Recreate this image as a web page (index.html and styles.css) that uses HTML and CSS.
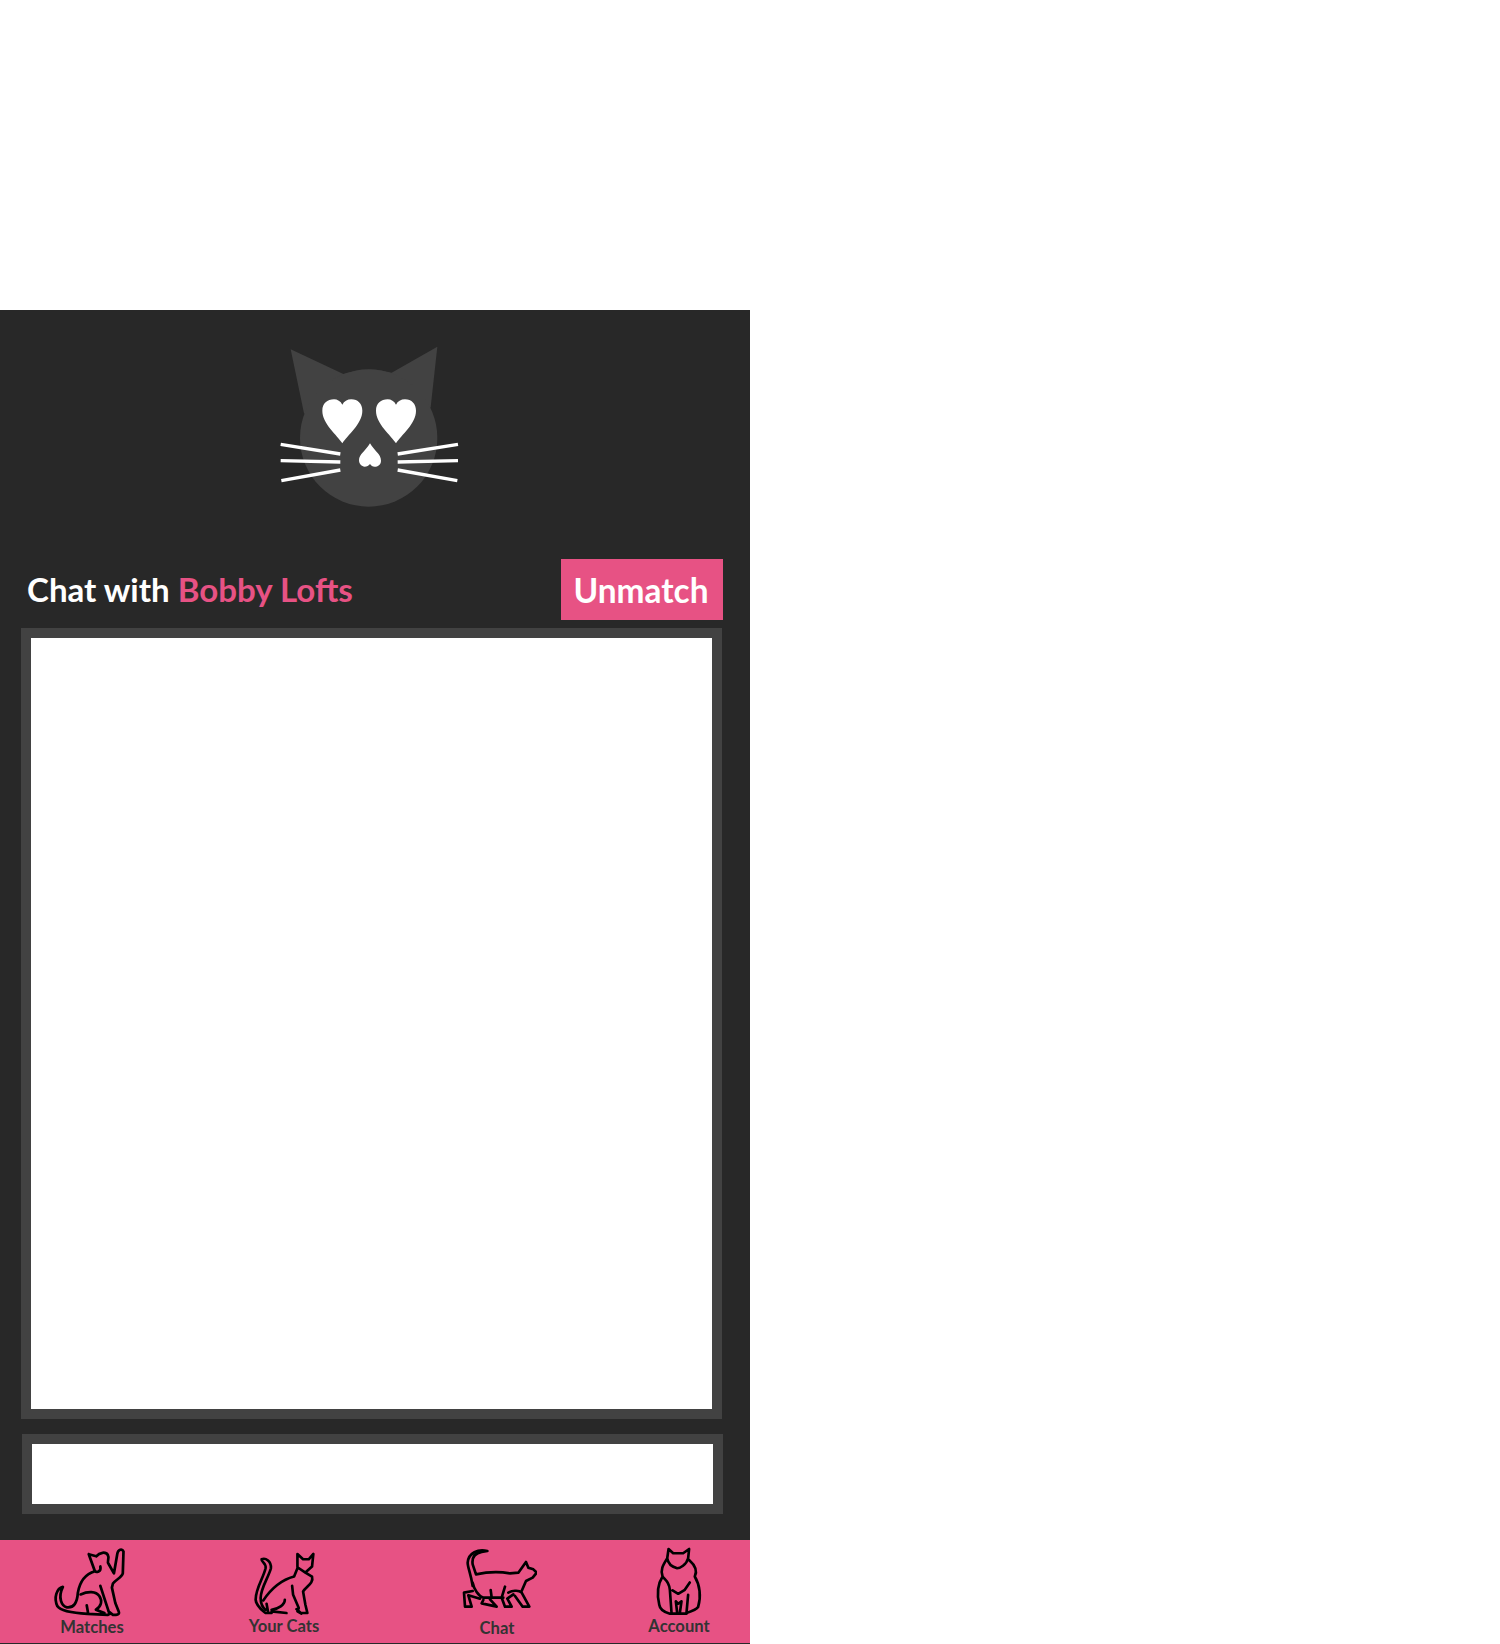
FILE: index.html
```html
<!DOCTYPE html>
<html lang="en">
<head>
<meta charset="utf-8">
<title>Chat</title>
<link rel="stylesheet" href="styles.css">
</head>
<body>
<main class="panel">
  <header class="logo">
    <svg class="logo-art" viewBox="0 0 720 600" aria-label="Cat logo">
      <path class="logo-head" d="M152 88 L310 162 Q385 138 455 158 L592 80 L572 262 L400 400 L192 280 Z"/>
      <circle class="logo-head" cx="386" cy="354" r="206"/>
      <path class="logo-fill" d="M307 370 C292 345 247 312 247 272 C247 250 262 238 282 238 C292 238 302 244 307 254 C312 244 322 238 334 238 C354 238 367 252 367 272 C367 312 322 345 307 370 Z"/>
      <path class="logo-fill" d="M468 370 C453 345 408 312 408 272 C408 250 423 238 443 238 C453 238 463 244 468 254 C473 244 483 238 495 238 C515 238 528 252 528 272 C528 312 483 345 468 370 Z"/>
      <path class="logo-fill" d="M390 370 C402 392 423 402 423 422 C423 434 413 440 404 440 C398 440 393 437 390 432 C387 437 380 440 374 440 C365 440 357 432 357 421 C357 402 378 392 390 370 Z"/>
      <path class="logo-whisker" d="M122 373 L301 402 M122 422 L301 426 M124 482 L301 450 M654 373 L473 402 M654 422 L473 426 M652 482 L473 450"/>
    </svg>
  </header>
  <section class="title-row">
    <h1 class="title">Chat with <span class="title-name">Bobby Lofts</span></h1>
    <button class="unmatch" type="button">Unmatch</button>
  </section>
  <div class="chat-box"></div>
  <div class="input-box"></div>
  <nav class="nav">
    <a class="nav-item nav-matches">
      <svg class="nav-icon" viewBox="156 45 235 220">
        <path d="M264 72 L286 78 C296 66 314 64 320 74 C326 84 316 94 322 100 L338 128 L348 70 C350 58 362 54 366 64 L364 128 C362 140 345 145 335 158 L332 170 L342 215 L352 240 C356 250 345 250 335 250 L322 240 M264 72 L282 122 C255 130 238 150 232 185 C230 215 220 230 200 228 C185 225 172 200 188 168 C170 172 160 200 172 225 C182 240 220 245 260 247 L320 250 M240 190 C262 180 285 180 295 195 C305 210 300 225 285 235 L310 245 M258 222 L262 245 M298 165 L325 248 M298 108 C302 125 285 125 283 122"/>
      </svg>
      <span class="nav-label">Matches</span>
    </a>
    <a class="nav-item nav-cats">
      <svg class="nav-icon" viewBox="175 60 205 205">
        <path d="M318 72 L335 88 L352 88 L366 72 L362 110 L342 128 L318 112 Z M318 115 L308 140 C270 150 240 175 215 212 M342 128 L362 140 C368 160 345 170 335 185 L342 225 L348 250 L328 250 L315 238 M210 88 C222 82 240 95 238 115 C232 140 207 175 207 205 C207 225 215 235 222 240 M210 88 C208 95 225 100 222 115 C215 145 192 175 192 210 C194 230 210 240 222 250 L240 250 M225 222 L230 250 M240 240 C260 238 280 225 280 210 M240 245 L285 250 M302 168 L305 195 L322 235 L318 245 L330 252"/>
      </svg>
      <span class="nav-label">Your Cats</span>
    </a>
    <a class="nav-item nav-chat">
      <svg class="nav-icon" viewBox="171 50 240 195">
        <path d="M262 65 C235 58 205 70 203 100 C203 115 212 130 218 170 M262 65 L245 68 C225 72 215 85 218 105 L228 135 C260 128 290 125 330 132 L355 130 L378 98 L385 115 L400 120 L410 130 L398 145 L378 155 L365 185 M218 160 C222 180 235 200 250 205 L310 205 M218 185 L192 190 L195 232 L215 232 L205 198 L240 208 M250 212 L245 222 L290 232 L270 210 M272 182 L275 205 M315 172 L305 205 L315 232 L335 232 L322 208 L340 195 M325 190 C335 185 355 180 365 190 L388 232 L368 232 L345 200"/>
      </svg>
      <span class="nav-label">Chat</span>
    </a>
    <a class="nav-item nav-account">
      <svg class="nav-icon" viewBox="190 45 155 220">
        <path d="M236 57 L250 70 L280 70 L298 57 L295 85 C290 105 270 115 262 115 C250 112 235 105 232 85 Z M232 85 C220 105 210 120 218 140 C205 160 200 190 208 225 C210 240 225 248 240 252 L290 252 M218 140 C225 150 238 155 240 180 L245 250 M248 182 L265 192 L285 180 L300 158 M298 90 C315 105 325 120 315 140 C330 165 335 200 325 232 C320 240 305 245 290 250 L295 195 M258 215 L262 250 M275 215 L270 250 M258 215 L265 222 L275 215"/>
      </svg>
      <span class="nav-label">Account</span>
    </a>
  </nav>
</main>
</body>
</html>
```

FILE: styles.css
```css
html, body {
  margin: 0;
  padding: 0;
  background: #fff;
}

body {
  padding-top: 310px;
  font-family: Lato, "Open Sans", sans-serif;
}

.panel {
  width: 750px;
  height: 1334px;
  background: #282828;
  overflow: hidden;
}

.logo {
  height: 249px;
  padding: 10px 0 0 240px;
  box-sizing: border-box;
}

.logo-art {
  display: block;
  width: 240px;
  height: 200px;
}

.logo-head { fill: #424242; }
.logo-fill { fill: #fff; }
.logo-whisker {
  fill: none;
  stroke: #fff;
  stroke-width: 10;
}

.title-row {
  display: flex;
  align-items: center;
  justify-content: space-between;
  height: 61px;
  padding: 0 27px;
}

.title {
  margin: 0 0 2px;
  font-size: 33.1px;
  font-weight: 700;
  color: #fff;
}

.title-name { color: #e75284; }

.unmatch {
  width: 162px;
  height: 61px;
  padding: 0 2px 0 0;
  border: 0;
  background: #e75284;
  color: #fff;
  font: 700 33.4px Lato, sans-serif;
}

.chat-box,
.input-box {
  box-sizing: border-box;
  width: 701px;
  background: #fff;
  border: 10px solid #424242;
}

.chat-box {
  height: 791px;
  margin: 8px 0 0 21px;
}

.input-box {
  height: 80px;
  margin: 15px 0 0 22px;
}

.nav {
  display: grid;
  grid-template-columns: 184px 200px 226px 138px;
  height: 103px;
  margin-top: 26px;
  background: #e75284;
}

.nav-item {
  display: flex;
  flex-direction: column;
  align-items: center;
}

.nav-icon {
  display: block;
  flex: none;
  fill: none;
  stroke: #000;
  stroke-width: 8;
  stroke-linejoin: round;
  stroke-linecap: round;
}

.nav-label {
  font-size: 16.6px;
  font-weight: 700;
  color: #333;
  line-height: 20px;
}

.nav-matches .nav-icon { width: 80px; height: 75px; margin: 5px 0 -3px; }
.nav-cats .nav-icon { width: 68px; height: 68px; margin: 10px 0 -2px; }
.nav-chat .nav-icon { width: 80px; height: 65px; margin: 6px 0 7px; }
.nav-account .nav-icon { width: 52px; height: 73px; margin: 5px 0 -2px; }
```
